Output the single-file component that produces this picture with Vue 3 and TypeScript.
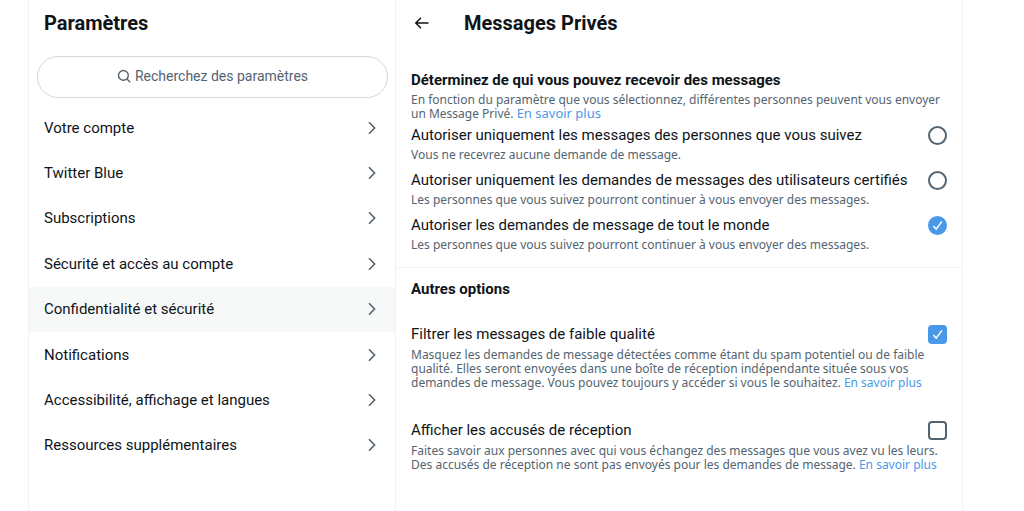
<script setup lang="ts">
import { ref } from 'vue'

interface Choice {
  id: string
  title: string
  note: string
}

interface Toggle extends Choice {
  link: string
  on: boolean
}

const sections: string[] = [
  'Votre compte',
  'Twitter Blue',
  'Subscriptions',
  'Sécurité et accès au compte',
  'Confidentialité et sécurité',
  'Notifications',
  'Accessibilité, affichage et langues',
  'Ressources supplémentaires',
]
const current = 'Confidentialité et sécurité'

const audiences: Choice[] = [
  {
    id: 'following',
    title: 'Autoriser uniquement les messages des personnes que vous suivez',
    note: 'Vous ne recevrez aucune demande de message.',
  },
  {
    id: 'verified',
    title: 'Autoriser uniquement les demandes de messages des utilisateurs certifiés',
    note: 'Les personnes que vous suivez pourront continuer à vous envoyer des messages.',
  },
  {
    id: 'everyone',
    title: 'Autoriser les demandes de message de tout le monde',
    note: 'Les personnes que vous suivez pourront continuer à vous envoyer des messages.',
  },
]
const audience = ref<string>('everyone')

const toggles = ref<Toggle[]>([
  {
    id: 'quality',
    title: 'Filtrer les messages de faible qualité',
    note: 'Masquez les demandes de message détectées comme étant du spam potentiel ou de faible qualité. Elles seront envoyées dans une boîte de réception indépendante située sous vos demandes de message. Vous pouvez toujours y accéder si vous le souhaitez.',
    link: 'En savoir plus',
    on: true,
  },
  {
    id: 'receipts',
    title: 'Afficher les accusés de réception',
    note: 'Faites savoir aux personnes avec qui vous échangez des messages que vous avez vu les leurs. Des accusés de réception ne sont pas envoyés pour les demandes de message.',
    link: 'En savoir plus',
    on: false,
  },
])

const query = ref<string>('')
</script>

<template>
  <div class="page">
    <aside class="sidebar">
      <h1 class="title side-title">Paramètres</h1>
      <label class="search">
        <svg class="search-icon" viewBox="0 0 14 14" aria-hidden="true">
          <circle cx="6.4" cy="6.4" r="4.9" />
          <path d="M9.9 9.9 13.2 13.2" />
        </svg>
        <input
          v-model="query"
          class="search-input"
          type="text"
          placeholder="Recherchez des paramètres"
          aria-label="Recherchez des paramètres"
        />
      </label>
      <nav class="menu">
        <a
          v-for="name in sections"
          :key="name"
          href="#"
          class="menu-item"
          :class="{ active: name === current }"
        >
          <span>{{ name }}</span>
          <svg class="chevron" viewBox="0 0 8 14" aria-hidden="true">
            <path d="M1 1.2 6.6 7 1 12.8" />
          </svg>
        </a>
      </nav>
    </aside>

    <main class="detail">
      <header class="detail-head">
        <button class="back" type="button" aria-label="Retour">
          <svg viewBox="0 0 16 14" aria-hidden="true">
            <path d="M14.5 7H2M7 1.8 1.8 7 7 12.2" />
          </svg>
        </button>
        <h2 class="title">Messages Privés</h2>
      </header>

      <section class="group audience">
        <h3 class="group-title">Déterminez de qui vous pouvez recevoir des messages</h3>
        <p class="note">
          En fonction du paramètre que vous sélectionnez, différentes personnes peuvent vous envoyer
          un Message Privé. <a class="link large" href="#">En savoir plus</a>
        </p>
        <div v-for="choice in audiences" :key="choice.id" class="choice">
          <div class="row">
            <label class="label" :for="choice.id">{{ choice.title }}</label>
            <span class="control">
              <input
                :id="choice.id"
                v-model="audience"
                class="box round"
                type="radio"
                name="audience"
                :value="choice.id"
              />
              <svg class="tick" viewBox="0 0 20 20" aria-hidden="true">
                <path d="M5.6 10.6 8.6 13.8 14.6 5.8" />
              </svg>
            </span>
          </div>
          <p class="note">{{ choice.note }}</p>
        </div>
      </section>

      <section class="group others">
        <h3 class="group-title">Autres options</h3>
        <div v-for="item in toggles" :key="item.id" class="toggle">
          <div class="row">
            <label class="label" :for="item.id">{{ item.title }}</label>
            <span class="control">
              <input :id="item.id" v-model="item.on" class="box" type="checkbox" />
              <svg class="tick" viewBox="0 0 20 20" aria-hidden="true">
                <path d="M5.6 10.6 8.6 13.8 14.6 5.8" />
              </svg>
            </span>
          </div>
          <p class="note">
            {{ item.note }} <a class="link" href="#">{{ item.link }}</a>
          </p>
        </div>
      </section>
    </main>
  </div>
</template>

<style>
body {
  margin: 0;
  background: #fff;
}
</style>

<style scoped>
.page {
  box-sizing: border-box;
  min-height: 100vh;
  padding: 0 61px 0 28px;
  display: grid;
  grid-template-columns: minmax(0, 368fr) minmax(0, 567fr);
  font-family: Roboto, 'Liberation Sans', sans-serif;
  font-size: 15px;
  line-height: 20px;
  color: #0f1419;
}

.sidebar {
  border-left: 1px solid #eff3f4;
  border-right: 1px solid #eff3f4;
}

.detail {
  border-right: 1px solid #eff3f4;
}

.title {
  margin: 0;
  font-size: 20px;
  line-height: 46px;
  font-weight: 700;
}

.side-title {
  padding: 0 15px;
}

.search {
  box-sizing: border-box;
  height: 42px;
  margin: 10px 7px 7px 8px;
  padding: 0 20px 2px;
  display: flex;
  align-items: center;
  justify-content: center;
  gap: 4px;
  border: 1px solid #cfd9de;
  border-radius: 21px;
}

.search-icon {
  width: 14px;
  height: 14px;
  fill: none;
  stroke: #536471;
  stroke-width: 1.4;
}

.search-input {
  field-sizing: content;
  min-width: 0;
  padding: 0;
  border: 0;
  outline: 0;
  background: none;
  font: inherit;
  font-size: 14px;
  color: #0f1419;
}

.search-input::placeholder {
  color: #536471;
  opacity: 1;
}

.menu {
  display: grid;
  grid-auto-rows: 1fr;
  min-height: 363px;
}

.menu-item {
  display: flex;
  align-items: center;
  justify-content: space-between;
  padding: 0 19px 0 15px;
  color: inherit;
  text-decoration: none;
}

.menu-item.active {
  background: #f7f9f9;
}

.chevron {
  width: 8px;
  height: 14px;
  fill: none;
  stroke: #536471;
  stroke-width: 1.6;
}

.detail-head {
  display: flex;
  align-items: center;
  gap: 34px;
  padding-left: 18px;
}

.back {
  display: flex;
  padding: 0;
  border: 0;
  background: none;
}

.back svg {
  width: 16px;
  height: 14px;
  fill: none;
  stroke: #0f1419;
  stroke-width: 1.5;
}

.group {
  padding: 0 15px;
}

.group-title {
  margin: 0;
  font-size: 15px;
  line-height: 20px;
  font-weight: 700;
}

.audience {
  padding-top: 24px;
  padding-bottom: 11px;
  border-bottom: 1px solid #eff3f4;
}

.note {
  margin: 0;
  padding-top: 3px;
  font-family: 'Noto Sans', 'Liberation Sans', sans-serif;
  font-size: 12px;
  line-height: 14px;
  color: #536471;
}

.link {
  display: inline-block;
  color: #4a99e9;
  text-decoration: none;
}

.link.large {
  font-size: 13px;
  line-height: 12px;
}

.choice {
  padding-top: 4px;
  padding-bottom: 4px;
}

.row {
  display: flex;
  align-items: center;
  justify-content: space-between;
}

.control {
  position: relative;
  display: flex;
  width: 19px;
  height: 19px;
}

.box {
  appearance: none;
  box-sizing: border-box;
  width: 19px;
  height: 19px;
  margin: 0;
  border: 2px solid #536471;
  border-radius: 4px;
}

.box.round {
  border-radius: 50%;
}

.box:checked {
  border-color: #4a99e9;
  background: #4a99e9;
}

.tick {
  position: absolute;
  inset: 0;
  display: none;
  fill: none;
  stroke: #fff;
  stroke-width: 1.5;
  pointer-events: none;
}

.box:checked + .tick {
  display: block;
}

.others {
  padding-top: 11px;
}

.toggle {
  padding-top: 25px;
  padding-bottom: 5px;
}

.toggle .note {
  padding-top: 4px;
}
</style>
